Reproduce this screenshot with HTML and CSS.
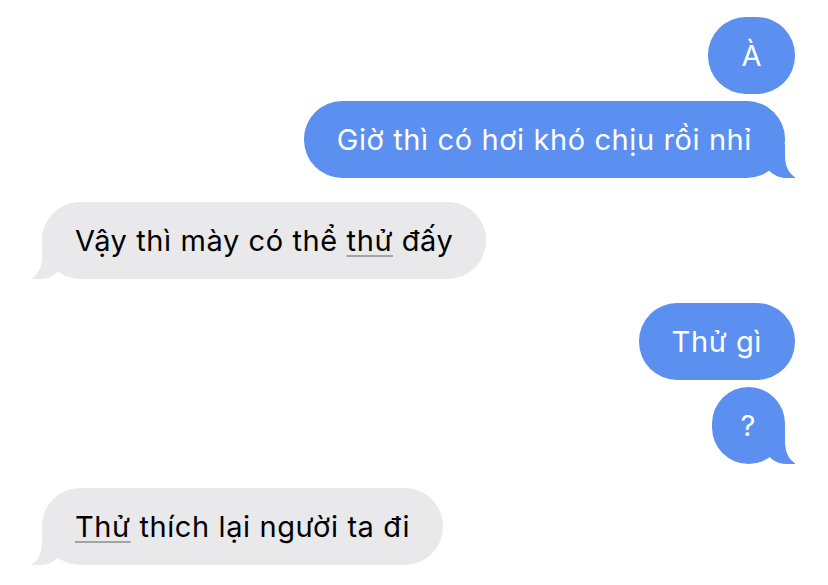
FILE: index.html
```html
<!DOCTYPE html>
<html lang="vi">
<head>
    <meta charset="UTF-8">
    <meta name="viewport" content="width=device-width, initial-scale=1.0">
    <title>Tin nhắn</title>
    <link rel="stylesheet" href="styles.css">
</head>
<body>
    <div class="chat">
        <div class="group sent">
            <div class="bubble">À</div>
            <div class="bubble tail">Giờ thì có hơi khó chịu rồi nhỉ</div>
        </div>

        <div class="group received">
            <div class="bubble tail">Vậy thì mày có thể <span class="link">thử</span> đấy</div>
        </div>

        <div class="group sent">
            <div class="bubble">Thử gì</div>
            <div class="bubble tail narrow">?</div>
        </div>

        <div class="group received">
            <div class="bubble tail"><span class="link">Thử</span> thích lại người ta đi</div>
        </div>
    </div>
</body>
</html>
```

FILE: styles.css
```css
body {
    margin: 0;
    padding: 0;
    background-color: #fff;
    font-family: Inter, "Noto Sans", sans-serif;
}
.chat {
    display: flex;
    flex-direction: column;
    gap: 24px;
    padding: 17px 33px 0 32px;
}
.group {
    display: flex;
    flex-direction: column;
    gap: 7px;
}
.sent {
    align-items: flex-end;
}
.received {
    align-items: flex-start;
}
.bubble {
    position: relative;
    height: 77px;
    line-height: 77px;
    padding: 0 33px;
    border-radius: 38px;
    font-size: 29px;
    letter-spacing: 0.6px;
    white-space: nowrap;
    box-sizing: border-box;
}
.narrow {
    padding: 0 29px;
}
.sent .bubble {
    background-color: #5b8ff0;
    color: #fff;
}
.received .bubble {
    background-color: #e9e9eb;
    color: #000;
}
.sent .tail {
    margin-right: 10px;
}
.received .tail {
    margin-left: 10px;
}

/* bubble tails */
.tail::before,
.tail::after {
    content: "";
    position: absolute;
    bottom: 0;
    height: 34px;
}
.sent .tail::before {
    right: -10px;
    width: 30px;
    background-color: #5b8ff0;
    border-bottom-left-radius: 22px 18px;
}
.sent .tail::after {
    right: -30px;
    width: 30px;
    background-color: #fff;
    border-bottom-left-radius: 14px 22px;
}
.received .tail::before {
    left: -10px;
    width: 30px;
    background-color: #e9e9eb;
    border-bottom-right-radius: 22px 18px;
}
.received .tail::after {
    left: -30px;
    width: 30px;
    background-color: #fff;
    border-bottom-right-radius: 14px 22px;
}
.link {
    text-decoration: underline;
    text-decoration-color: #a3a3a8;
    text-decoration-thickness: 2px;
    text-underline-offset: 4px;
}
```
